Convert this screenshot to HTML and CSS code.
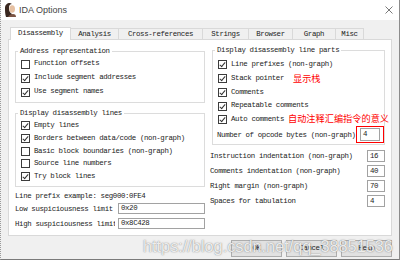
FILE: index.html
```html
<!DOCTYPE html>
<html lang="en">
<head>
    <meta charset="UTF-8">
    <meta name="viewport" content="width=device-width, initial-scale=1.0">
    <title>IDA Options</title>
    <link rel="stylesheet" href="styles.css">
</head>
<body>
    <div class="window">
        <div class="titlebar">
            <svg class="app-icon" width="11" height="14" viewBox="0 0 11 14">
                <path d="M5 0C2 0 0 2 0 5c0 3 0 6 1 9h5l1-3C5 10 4 8 4 5s1-4 3-4z" fill="#3a2820"/>
                <ellipse cx="7.2" cy="6" rx="2.8" ry="3.8" fill="#e6c0a2"/>
                <path d="M3 14c1-2 3-3 5-3s3 1 3 3z" fill="#7a5444"/>
            </svg>
            <span class="title">IDA Options</span>
            <svg class="close" width="8" height="8" viewBox="0 0 8 8">
                <path d="M0.5 0.5L7.5 7.5M7.5 0.5L0.5 7.5" stroke="#6a6a6a" stroke-width="0.9"/>
            </svg>
        </div>

        <div class="tabs">
            <div class="tab active t-dis">Disassembly</div>
            <div class="tab t-ana">Analysis</div>
            <div class="tab t-xref">Cross-references</div>
            <div class="tab t-str">Strings</div>
            <div class="tab t-brw">Browser</div>
            <div class="tab t-grp">Graph</div>
            <div class="tab t-misc">Misc</div>
        </div>

        <div class="panel">
            <div class="col left">
                <div class="group g-addr">
                    <div class="group-title">Address representation</div>
                    <div class="rows">
                        <div class="row"><span class="cb"></span>Function offsets</div>
                        <div class="row"><span class="cb on"></span>Include segment addresses</div>
                        <div class="row"><span class="cb on"></span>Use segment names</div>
                    </div>
                </div>

                <div class="group g-lines">
                    <div class="group-title">Display disassembly lines</div>
                    <div class="rows">
                        <div class="row"><span class="cb on"></span>Empty lines</div>
                        <div class="row"><span class="cb on"></span>Borders between data/code (non-graph)</div>
                        <div class="row"><span class="cb"></span>Basic block boundaries (non-graph)</div>
                        <div class="row"><span class="cb"></span>Source line numbers</div>
                        <div class="row"><span class="cb on"></span>Try block lines</div>
                    </div>
                </div>

                <div class="prefix">Line prefix example: seg000:0FE4</div>
                <div class="field low">
                    <span class="field-label">Low suspiciousness limit</span>
                    <span class="input wide">0x20</span>
                </div>
                <div class="field high">
                    <span class="field-label">High suspiciousness limit</span>
                    <span class="input wide">0x8C428</span>
                </div>
            </div>

            <div class="col right">
                <div class="group g-parts">
                    <div class="group-title">Display disassembly line parts</div>
                    <div class="rows">
                        <div class="row"><span class="cb on"></span>Line prefixes (non-graph)</div>
                        <div class="row"><span class="cb on"></span>Stack pointer</div>
                        <div class="row"><span class="cb on"></span>Comments</div>
                        <div class="row"><span class="cb on"></span>Repeatable comments</div>
                        <div class="row"><span class="cb on"></span>Auto comments</div>
                    </div>
                    <div class="opcode">
                        <span>Number of opcode bytes (non-graph)</span>
                        <span class="input op">4</span>
                    </div>
                </div>

                <div class="nums">
                    <div class="num-row"><span>Instruction indentation (non-graph)</span><span class="input small">16</span></div>
                    <div class="num-row"><span>Comments indentation (non-graph)</span><span class="input small">40</span></div>
                    <div class="num-row"><span>Right margin (non-graph)</span><span class="input small">70</span></div>
                    <div class="num-row"><span>Spaces for tabulation</span><span class="input small">4</span></div>
                </div>
            </div>
        </div>

        <div class="buttons">
            <div class="btn">OK</div>
            <div class="btn">Cancel</div>
            <div class="btn">Help</div>
        </div>
    </div>
    <div class="below"></div>

    <!-- annotations drawn over the screenshot -->
    <div class="note note-stack">显示栈</div>
    <div class="note note-auto">自动注释汇编指令的意义</div>
    <div class="mark"></div>
    <div class="watermark">https://blog.csdn.net/qq_38851536</div>
</body>
</html>
```

FILE: styles.css
```css
body {
    margin: 0;
    width: 401px;
    height: 265px;
    overflow: hidden;
    background: #fff;
    position: relative;
    font-family: "Liberation Mono", "DejaVu Sans Mono", monospace;
    font-size: 7.4px;
    letter-spacing: -0.36px;
    color: #222;
}
.window {
    width: 400px;
    height: 260px;
    box-sizing: border-box;
    border-left: 1px dotted #9a9a9a;
    border-right: 1px solid #8c8c8c;
    border-bottom: 1px solid #7a7a7a;
    background: #f0f0f0;
}
.titlebar {
    height: 20px;
    background: #fff;
    display: flex;
    align-items: center;
}
.app-icon {
    margin-left: 4px;
}
.title {
    margin-left: 3px;
    font-family: "Liberation Sans", Arial, sans-serif;
    font-size: 9px;
    letter-spacing: 0;
    color: #444;
}
.close {
    margin-left: auto;
    margin-right: 6px;
    margin-top: -1px;
}

/* tabs */
.tabs {
    display: flex;
    align-items: flex-end;
    height: 12px;
    margin: 7px 0 0 10px;
}
.tab {
    box-sizing: border-box;
    height: 11px;
    margin-left: -1px;
    border: 1px solid #d9d9d9;
    border-bottom: none;
    background: #f0f0f0;
    text-align: center;
    line-height: 10px;
}
.tab.active {
    position: relative;
    z-index: 2;
    height: 13px;
    margin-bottom: -1px;
    background: #fff;
    line-height: 11px;
}
.t-dis { width: 61px; }
.t-ana { width: 49px; }
.t-xref { width: 85px; }
.t-str { width: 47px; }
.t-brw { width: 45px; }
.t-grp { width: 44px; }
.t-misc { width: 29px; }

/* panel */
.panel {
    display: flex;
    box-sizing: border-box;
    width: 384px;
    height: 197px;
    margin-left: 7px;
    padding-left: 6px;
    border: 1px solid #d9d9d9;
    background: #fff;
}
.col.left {
    width: 190px;
    margin-right: 5px;
}
.col.right {
    width: 175px;
}
.group {
    border: 1px solid #dcdcdc;
    padding: 0 0 3px 5px;
}
.group-title {
    width: max-content;
    height: 8px;
    line-height: 8px;
    margin: -5px 0 0 -3px;
    padding: 0 2px;
    background: #fff;
}
.row {
    display: flex;
    align-items: center;
    height: 14px;
    line-height: 1;
}
.cb {
    position: relative;
    box-sizing: border-box;
    width: 9px;
    height: 9px;
    margin-right: 4px;
    border: 1px solid #3c3c3c;
    background: #fff;
}
.cb.on::after {
    content: "";
    position: absolute;
    left: 2px;
    top: 0px;
    width: 2px;
    height: 5px;
    border-right: 1px solid #333;
    border-bottom: 1px solid #333;
    transform: rotate(40deg);
}

.g-addr {
    margin-top: 11px;
}
.g-addr .rows {
    margin-top: 2px;
}
.g-lines {
    margin-top: 10px;
}
.g-lines .rows {
    margin-top: 2.5px;
}
.g-lines .row {
    height: 12.7px;
}

.prefix {
    height: 12px;
    line-height: 12px;
    margin-top: 3px;
}
.field {
    display: flex;
    align-items: center;
    height: 14px;
}
.field.high {
    margin-top: 1px;
}
.field-label {
    width: 101px;
    margin-right: 3px;
    overflow: hidden;
    white-space: nowrap;
}
.input {
    box-sizing: border-box;
    border: 1px solid #a2a2a2;
    background: #fff;
    padding-left: 2px;
    line-height: 9px;
}
.input.wide {
    width: 88px;
    height: 11px;
}

/* right column */
.g-parts {
    margin: 10px 0 0 2px;
    padding-bottom: 2px;
}
.g-parts .rows {
    margin-top: 4px;
}
.g-parts .row {
    height: 13.75px;
}
.opcode {
    display: flex;
    align-items: center;
    justify-content: space-between;
    height: 14px;
    margin: 1px 4px 0 -1px;
}
.input.op {
    width: 20px;
    height: 13px;
    line-height: 11px;
}
.nums {
    margin-top: 3.5px;
}
.num-row {
    display: flex;
    align-items: center;
    justify-content: space-between;
    height: 15px;
}
.input.small {
    width: 18px;
    height: 12px;
    line-height: 10px;
}

/* buttons */
.buttons {
    display: flex;
    justify-content: flex-end;
    gap: 4px;
    margin: 4px 7px 0 0;
}
.btn {
    box-sizing: border-box;
    width: 51px;
    height: 17px;
    border: 1px solid #adadad;
    background: #e1e1e1;
    text-align: center;
    line-height: 15px;
}
.below {
    height: 5px;
    background: #fff;
}

/* overlays */
.note {
    position: absolute;
    font-family: "Noto Sans CJK SC", sans-serif;
    font-size: 9.2px;
    line-height: 1;
    letter-spacing: 0;
    color: #f00;
}
.note-stack {
    left: 293px;
    top: 74px;
}
.note-auto {
    left: 288px;
    top: 114px;
}
.mark {
    position: absolute;
    left: 356px;
    top: 126px;
    width: 28px;
    height: 17px;
    box-sizing: border-box;
    border: 1.5px solid #f00;
}
.watermark {
    position: absolute;
    left: 143px;
    top: 238px;
    font-family: "Liberation Sans", Arial, sans-serif;
    font-size: 16.3px;
    line-height: 1;
    letter-spacing: 0;
    white-space: nowrap;
    color: rgba(255, 255, 255, 0.85);
    text-shadow: 0 0 1px rgba(90, 90, 90, 0.7), 0 0 2px rgba(120, 120, 120, 0.35);
}
```
